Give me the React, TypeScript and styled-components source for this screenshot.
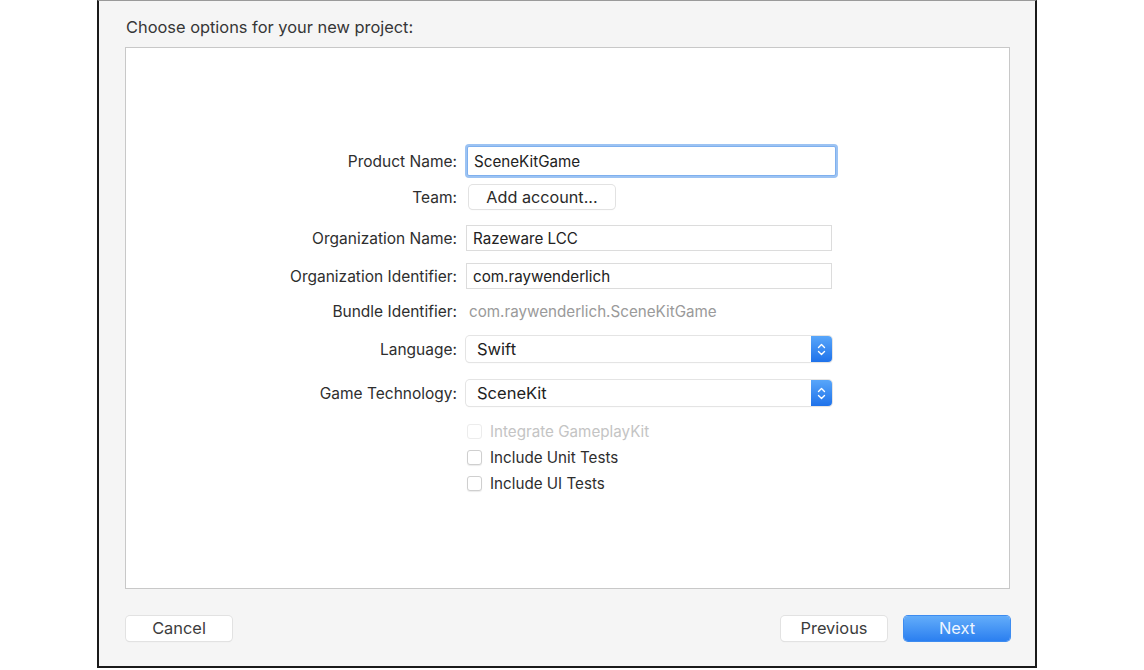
import React from 'react'
import styled, { createGlobalStyle } from 'styled-components'

const GlobalStyle = createGlobalStyle`
  html, body {
    margin: 0;
    padding: 0;
    background: #ffffff;
  }
  body {
    font-family: Inter, "Liberation Sans", Arial, sans-serif;
    color: #2e2e2e;
  }
`

const Sheet = styled.div`
  box-sizing: border-box;
  width: 940px;
  height: 668px;
  margin-left: 97px;
  background: #f5f5f5;
  border: 2px solid #1a1a1a;
  border-top: 1px solid #9a9a9a;
  display: flex;
  flex-direction: column;
  padding: 0 25px 0 27px;
`

const Title = styled.div`
  font-size: 16.4px;
  color: #363636;
  height: 46px;
  display: flex;
  align-items: center;
  padding-top: 6px;
  box-sizing: border-box;
`

const Panel = styled.div`
  box-sizing: border-box;
  height: 542px;
  margin-left: -1px;
  background: #ffffff;
  border: 1px solid #c8c8c8;
  padding: 98px 0 0 131px;
  display: flex;
  flex-direction: column;
`

const Row = styled.div<{ $top: number; $h: number }>`
  display: flex;
  align-items: center;
  height: ${p => p.$h}px;
  margin-top: ${p => p.$top}px;
`

const Label = styled.div`
  width: 200px;
  text-align: right;
  font-size: 15.5px;
  color: #2e2e2e;
  padding-right: 9px;
  flex-shrink: 0;
  white-space: nowrap;
`

const Field = styled.div<{ $focused?: boolean }>`
  box-sizing: border-box;
  width: ${p => (p.$focused ? 369 : 366)}px;
  height: 100%;
  background: #ffffff;
  border: 1px solid ${p => (p.$focused ? '#7fb0ee' : '#dcdcdc')};
  box-shadow: ${p => (p.$focused ? '0 0 0 2px #9cc3f3' : 'none')};
  border-radius: ${p => (p.$focused ? '2px' : '0')};
  display: flex;
  align-items: center;
  padding-left: 6px;
  font-size: 15.2px;
  color: #222222;
  margin-left: ${p => (p.$focused ? '1px' : '0')};
`

const PlainValue = styled.div`
  font-size: 15.2px;
  color: #9a9a9a;
  padding-left: 3px;
`

const SmallButton = styled.div`
  box-sizing: border-box;
  height: 100%;
  width: 146px;
  margin-left: 3px;
  background: #ffffff;
  border-radius: 4px;
  box-shadow: 0 0 0 1px #e2e2e2, 0 1px 1px rgba(0, 0, 0, 0.12);
  display: flex;
  align-items: center;
  justify-content: center;
  font-size: 16.2px;
  color: #2a2a2a;
`

const Popup = styled.div`
  box-sizing: border-box;
  width: 366px;
  height: 100%;
  background: #ffffff;
  border-radius: 4px;
  box-shadow: 0 0 0 1px #e4e4e4, 0 1px 1px rgba(0, 0, 0, 0.14);
  display: flex;
  align-items: center;
  overflow: hidden;
`

const PopupText = styled.div`
  flex: 1;
  padding-left: 11px;
  font-size: 16.5px;
  color: #222222;
`

const Stepper = styled.div`
  width: 21px;
  height: 100%;
  background: linear-gradient(#58a6fa, #1f72ea);
  display: flex;
  align-items: center;
  justify-content: center;
`

const Check = styled.div<{ $disabled?: boolean }>`
  box-sizing: border-box;
  width: 15px;
  height: 15px;
  border-radius: 3px;
  background: #ffffff;
  border: 1px solid ${p => (p.$disabled ? '#ececec' : '#cfcfcf')};
  box-shadow: ${p => (p.$disabled ? 'none' : '0 1px 1px rgba(0, 0, 0, 0.08)')};
  margin-left: 210px;
`

const CheckText = styled.div<{ $disabled?: boolean }>`
  margin-left: 8px;
  font-size: 15.2px;
  color: ${p => (p.$disabled ? '#c4c4c4' : '#2e2e2e')};
`

const Footer = styled.div`
  display: flex;
  align-items: flex-start;
  padding-top: 27px;
`

const PushButton = styled.div<{ $primary?: boolean }>`
  box-sizing: border-box;
  width: 106px;
  height: 25px;
  padding-bottom: 2px;
  border-radius: 4px;
  background: ${p => (p.$primary ? 'linear-gradient(#63adfa, #2b7ff0)' : '#ffffff')};
  box-shadow: ${p =>
    p.$primary
      ? '0 0 0 1px #3d8cf0'
      : '0 0 0 1px #e2e2e2, 0 1px 1px rgba(0, 0, 0, 0.12)'};
  display: flex;
  align-items: center;
  justify-content: center;
  font-size: 16.4px;
  color: ${p => (p.$primary ? '#eef5ff' : '#3c3c3c')};
`

const Spacer = styled.div`
  flex: 1;
`

const Gap = styled.div`
  width: 17px;
`

function StepperIcon () {
  return (
    <svg width="9" height="15" viewBox="0 0 9 15">
      <path d="M1.5 5.5 L4.5 2.5 L7.5 5.5" fill="none" stroke="#ffffff" strokeWidth="1.4" strokeLinecap="round" strokeLinejoin="round" />
      <path d="M1.5 9.5 L4.5 12.5 L7.5 9.5" fill="none" stroke="#ffffff" strokeWidth="1.4" strokeLinecap="round" strokeLinejoin="round" />
    </svg>
  )
}

function PopupButton ({ value }: { value: string }) {
  return (
    <Popup>
      <PopupText>{value}</PopupText>
      <Stepper><StepperIcon /></Stepper>
    </Popup>
  )
}

export default function App () {
  return (
    <>
      <GlobalStyle />
      <Sheet>
        <Title>Choose options for your new project:</Title>
        <Panel>
          <Row $top={0} $h={30}>
            <Label>Product Name:</Label>
            <Field $focused>SceneKitGame</Field>
          </Row>
          <Row $top={9} $h={24}>
            <Label>Team:</Label>
            <SmallButton>Add account...</SmallButton>
          </Row>
          <Row $top={16} $h={26}>
            <Label>Organization Name:</Label>
            <Field>Razeware LCC</Field>
          </Row>
          <Row $top={12} $h={26}>
            <Label>Organization Identifier:</Label>
            <Field>com.raywenderlich</Field>
          </Row>
          <Row $top={12} $h={20}>
            <Label>Bundle Identifier:</Label>
            <PlainValue>com.raywenderlich.SceneKitGame</PlainValue>
          </Row>
          <Row $top={15} $h={26}>
            <Label>Language:</Label>
            <PopupButton value="Swift" />
          </Row>
          <Row $top={18} $h={26}>
            <Label>Game Technology:</Label>
            <PopupButton value="SceneKit" />
          </Row>
          <Row $top={18} $h={15}>
            <Check $disabled />
            <CheckText $disabled>Integrate GameplayKit</CheckText>
          </Row>
          <Row $top={11} $h={15}>
            <Check />
            <CheckText>Include Unit Tests</CheckText>
          </Row>
          <Row $top={11} $h={15}>
            <Check />
            <CheckText>Include UI Tests</CheckText>
          </Row>
        </Panel>
        <Footer>
          <PushButton>Cancel</PushButton>
          <Spacer />
          <PushButton>Previous</PushButton>
          <Gap />
          <PushButton $primary>Next</PushButton>
        </Footer>
      </Sheet>
    </>
  )
}
